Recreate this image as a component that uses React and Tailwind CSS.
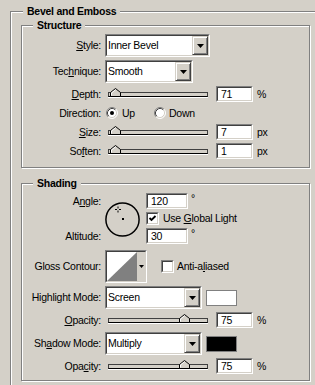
import React from "react";

// classic win32 bevels
const sunkenOuter = "border border-t-[#808080] border-l-[#808080] border-r-white border-b-white";
const sunkenInner = "border border-t-[#404040] border-l-[#404040] border-r-[#d4d0c8] border-b-[#d4d0c8]";

const Group = ({ title, titleLeft, className, children }) => (
  <div className={`relative border border-[#808080] shadow-[inset_1px_1px_0_#fff,1px_1px_0_#fff] ${className}`}>
    <span className={`absolute top-[-7px] bg-[#d4d0c8] px-[4px] font-bold leading-[13px] ${titleLeft}`}>{title}</span>
    {children}
  </div>
);

const Label = ({ children }) => (
  <div className="w-[79px] shrink-0 text-right whitespace-nowrap">{children}</div>
);

const DropButton = () => (
  <div className="flex h-full w-[16px] items-center justify-center border border-t-[#d4d0c8] border-l-[#d4d0c8] border-r-[#404040] border-b-[#404040] bg-[#d4d0c8] shadow-[inset_1px_1px_0_#fff,inset_-1px_-1px_0_#808080]">
    <svg width="7" height="4" viewBox="0 0 7 4">
      <path d="M0 0H7L3.5 4Z" fill="#000" />
    </svg>
  </div>
);

const Dropdown = ({ value, width }) => (
  <div className={`h-[23px] ${width} ${sunkenOuter}`}>
    <div className={`flex h-full items-center bg-white ${sunkenInner}`}>
      <span className="flex-1 pl-[1px] whitespace-nowrap">{value}</span>
      <DropButton />
    </div>
  </div>
);

const Field = ({ value, width = "w-[37px]" }) => (
  <div className={`h-[16px] shrink-0 ${width} ${sunkenOuter}`}>
    <div className={`flex h-full items-center bg-white pl-[3px] ${sunkenInner}`}>{value}</div>
  </div>
);

const Thumb = ({ left }) => (
  <svg className={`absolute bottom-[-1px] ${left}`} width="11" height="9" viewBox="0 0 11 9">
    <path d="M0.5 8.5V4.5L5.5 0.5L10.5 4.5V8.5Z" fill="#d4d0c8" stroke="#000" />
    <path d="M1.5 7.5V5L5.5 1.8" fill="none" stroke="#fff" />
  </svg>
);

const Slider = ({ thumb }) => (
  <div className="relative ml-[3px] h-[5px] w-[100px] shrink-0 border border-t-[#404040] border-l-[#404040] border-r-[#404040] border-b-black bg-[#d4d0c8] shadow-[0_1px_0_#fff]">
    <Thumb left={thumb} />
  </div>
);

const SliderRow = ({ label, value, unit, thumb = "left-[1px]" }) => (
  <div className="flex h-[16px] items-center gap-[4px]">
    <Label>{label}</Label>
    <Slider thumb={thumb} />
    <div className="ml-[4px]">
      <Field value={value} />
    </div>
    <span className="ml-[0px]">{unit}</span>
  </div>
);

const Radio = ({ checked }) => (
  <svg width="12" height="12" viewBox="0 0 12 12" className="shrink-0">
    <circle cx="6" cy="6" r="5" fill="#fff" />
    <path d="M2.11 9.89A5.5 5.5 0 0 1 9.89 2.11" fill="none" stroke="#808080" />
    <path d="M9.89 2.11A5.5 5.5 0 0 1 2.11 9.89" fill="none" stroke="#fff" />
    <path d="M2.82 9.18A4.5 4.5 0 0 1 9.18 2.82" fill="none" stroke="#404040" />
    <path d="M9.18 2.82A4.5 4.5 0 0 1 2.82 9.18" fill="none" stroke="#d4d0c8" />
    {checked && <circle cx="6" cy="6" r="2" fill="#000" />}
  </svg>
);

const Checkbox = ({ checked }) => (
  <div className={`h-[13px] w-[13px] shrink-0 ${sunkenOuter}`}>
    <div className={`h-full bg-white ${sunkenInner}`}>
      {checked && (
        <svg width="9" height="9" viewBox="0 0 9 9">
          <path d="M1.5 4L3.5 6L7.5 2" fill="none" stroke="#000" strokeWidth="1.8" />
        </svg>
      )}
    </div>
  </div>
);

const AngleDial = () => (
  <svg width="35" height="35" viewBox="0 0 35 35" className="mt-[9px] shrink-0">
    <circle cx="17.5" cy="17.5" r="16.6" fill="none" stroke="#000" strokeWidth="1.5" />
    <rect x="17" y="16" width="2" height="2" fill="#000" />
    <path d="M10 7.5H12M14 7.5H16M13 4.5V6.5M13 8.5V10.5" stroke="#000" strokeWidth="1" />
  </svg>
);

const ContourPicker = () => (
  <div className={`h-[33px] w-[42px] shrink-0 ${sunkenOuter}`}>
    <div className={`flex h-full ${sunkenInner}`}>
      <svg width="30" height="29" viewBox="0 0 30 29" className="shrink-0">
        <rect width="30" height="29" fill="#fff" />
        <path d="M0 29L30 0V29Z" fill="#808080" />
      </svg>
      <div className="flex flex-1 items-center justify-center bg-[#d4d0c8]">
        <svg width="5" height="3" viewBox="0 0 5 3">
          <path d="M0 0H5L2.5 3Z" fill="#000" />
        </svg>
      </div>
    </div>
  </div>
);

export default function App() {
  return (
    <div className="h-[385px] w-[315px] overflow-hidden bg-[#d4d0c8] font-['Liberation_Sans',Arial,sans-serif] text-[10.5px] leading-[13px] tracking-[-0.25px] text-black">
      <Group title="Bevel and Emboss" titleLeft="left-[12px]" className="ml-[10px] mt-[11px] h-[400px] w-[320px] pl-[10px] pt-[13px]">
        <Group title="Structure" titleLeft="left-[11px]" className="h-[143px] w-[289px]">
          <div className="flex flex-col gap-[3px] pt-[8px]">
            <div className="flex h-[23px] items-center gap-[4px]">
              <Label><u className="underline-offset-1">S</u>tyle:</Label>
              <Dropdown value="Inner Bevel" width="w-[105px]" />
            </div>
            <div className="flex h-[23px] items-center gap-[4px]">
              <Label>Tec<u className="underline-offset-1">h</u>nique:</Label>
              <Dropdown value="Smooth" width="w-[88px]" />
            </div>
            <SliderRow label={<><u className="underline-offset-1">D</u>epth:</>} value="71" unit="%" />
            <div className="flex h-[16px] items-center gap-[4px]">
              <Label>Direction:</Label>
              <div className="flex w-[45px] items-center gap-[4px] pl-[1px]">
                <Radio checked />
                <span>Up</span>
              </div>
              <div className="flex items-center gap-[3px]">
                <Radio />
                <span>Down</span>
              </div>
            </div>
            <SliderRow label={<><u className="underline-offset-1">S</u>ize:</>} value="7" unit="px" />
            <SliderRow label={<>So<u className="underline-offset-1">f</u>ten:</>} value="1" unit="px" />
          </div>
        </Group>

        <Group title="Shading" titleLeft="left-[11px]" className="mt-[15px] h-[198px] w-[289px]">
          <div className="flex flex-col pt-[9px]">
            <div className="flex">
              <div className="flex w-[79px] shrink-0 flex-col">
                <div className="flex h-[16px] items-center justify-end">
                  A<u className="underline-offset-1">n</u>gle:
                </div>
                <div className="mt-[19px] flex h-[16px] items-center justify-end">Altitude:</div>
              </div>
              <div className="ml-[4px]">
                <AngleDial />
              </div>
              <div className="ml-[6px] flex flex-col gap-[3px]">
                <div className="flex h-[16px] items-start gap-[3px]">
                  <Field value="120" width="w-[42px]" />
                  <span className="leading-[10px]">°</span>
                </div>
                <div className="flex h-[13px] items-center gap-[4px]">
                  <Checkbox checked />
                  <span>Use <u className="underline-offset-1">G</u>lobal Light</span>
                </div>
                <div className="flex h-[16px] items-start gap-[3px]">
                  <Field value="30" width="w-[42px]" />
                  <span className="leading-[10px]">°</span>
                </div>
              </div>
            </div>

            <div className="mt-[6px] flex h-[33px] items-center gap-[4px]">
              <Label>Gloss Contour:</Label>
              <ContourPicker />
              <div className="ml-[10px] flex items-center gap-[3px]">
                <Checkbox />
                <span>Anti-a<u className="underline-offset-1">l</u>iased</span>
              </div>
            </div>

            <div className="mt-[3px] flex h-[23px] items-center gap-[4px]">
              <Label>Highlight Mode:</Label>
              <Dropdown value="Screen" width="w-[97px]" />
              <div className="h-[16px] w-[31px] border border-[#808080] bg-white" />
            </div>
            <div className="mt-[3px]">
              <SliderRow label={<><u className="underline-offset-1">O</u>pacity:</>} value="75" unit="%" thumb="left-[70px]" />
            </div>
            <div className="mt-[4px] flex h-[23px] items-center gap-[4px]">
              <Label>Sh<u className="underline-offset-1">a</u>dow Mode:</Label>
              <Dropdown value="Multiply" width="w-[97px]" />
              <div className="h-[16px] w-[31px] border border-[#808080] bg-black" />
            </div>
            <div className="mt-[3px]">
              <SliderRow label={<>Opa<u className="underline-offset-1">c</u>ity:</>} value="75" unit="%" thumb="left-[70px]" />
            </div>
          </div>
        </Group>
      </Group>
    </div>
  );
}
